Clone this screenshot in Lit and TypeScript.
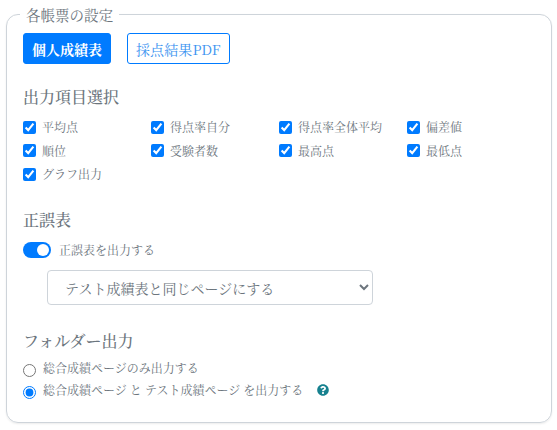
import { LitElement, html, css } from "lit";
import { customElement } from "lit/decorators.js";

const items = ["平均点", "得点率自分", "得点率全体平均", "偏差値", "順位", "受験者数", "最高点", "最低点", "グラフ出力"];

@customElement("app-root")
export class AppRoot extends LitElement {
  static styles = css`
    :host { display: block; font-family: "Noto Serif CJK JP", "DejaVu Serif", "Noto Sans CJK JP", serif; color: #6c757d; background: #fff; height: 430px; box-sizing: border-box; padding: 5px 6px 0; }
    * { box-sizing: border-box; }
    fieldset { margin: 0; height: 418px; width: 545px; border: 1px solid #ced4da; border-radius: 12px; padding: 0 16px; box-shadow: 0 1px 2px rgba(0,0,0,.08); }
    legend { font-size: 14.5px; line-height: 16px; padding: 2px 6px 0; margin-left: -3px; }
    .tabs { display: flex; gap: 16px; margin-top: 10px; }
    .btn { height: 31px; border-radius: 3px; border: 1px solid #007bff; font: inherit; font-size: 14px; padding: 0 8px; background: #fff; color: #3b93f0; }
    .btn.alt { letter-spacing: .1px; }
    .btn.on { background: #007bff; border-color: #007bff; color: #fff; font-weight: 700; }
    h3 { margin: 0; font-size: 16px; line-height: 20px; font-weight: 500; color: #6c757d; }
    .h1 { margin-top: 23px; }
    .grid { display: grid; grid-template-columns: repeat(4, 128px); row-gap: 3.5px; margin-top: 10px; }
    label { display: flex; align-items: center; font-size: 12px; line-height: 20px; height: 20px; }
    input[type=checkbox] { margin: 0 6px 0 0; width: 13px; height: 13px; accent-color: #007bff; }
    .h2 { margin-top: 26px; }
    .switch { margin-top: 10px; gap: 8px; }
    .track { width: 28px; height: 16px; border-radius: 8px; background: #007bff; display: flex; justify-content: flex-end; align-items: center; padding-right: 2px; }
    .knob { width: 12px; height: 12px; border-radius: 50%; background: #fff; }
    select { display: block; margin: 10px 0 0 24px; width: 326px; height: 35px; border: 1px solid #ced4da; border-radius: 4px; background: #fff; color: #6c757d; font: inherit; font-size: 14px; padding: 0 13px; }
    .h3 { margin-top: 26px; }
    .radio { gap: 7px; height: 22px; align-items: center; padding-bottom: 2px; }
    .radio input { margin: 4px 0 0; width: 13px; height: 13px; accent-color: #007bff; }
    .r1 { margin-top: 7px; }
    .help { margin-left: 7px; width: 12px; height: 12px; display: block; }
  `;
  render() {
    return html`<fieldset>
      <legend>各帳票の設定</legend>
      <div class="tabs"><button class="btn on">個人成績表</button><button class="btn alt">採点結果PDF</button></div>
      <h3 class="h1">出力項目選択</h3>
      <div class="grid">${items.map((t) => html`<label><input type="checkbox" checked />${t}</label>`)}</div>
      <h3 class="h2">正誤表</h3>
      <label class="switch"><span class="track"><span class="knob"></span></span>正誤表を出力する</label>
      <select><option>テスト成績表と同じページにする</option></select>
      <h3 class="h3">フォルダー出力</h3>
      <label class="radio r1"><input type="radio" name="f" />総合成績ページのみ出力する</label>
      <label class="radio"><input type="radio" name="f" checked />総合成績ページ と テスト成績ページ を出力する
        <svg class="help" viewBox="0 0 512 512"><path fill="#17818f" d="M504 256c0 137-111 248-248 248S8 393 8 256 119 8 256 8s248 111 248 248zM263 90c-54 0-89 23-116 63-4 5-3 12 3 16l35 26c5 4 13 3 17-2 18-23 30-36 58-36 21 0 46 13 46 33 0 15-12 23-33 34-23 13-54 30-54 71v4c0 7 5 12 12 12h56c7 0 12-5 12-12v-1c0-29 84-30 84-107 0-58-60-101-120-101zm-7 248c-25 0-46 21-46 46s21 46 46 46 46-21 46-46-21-46-46-46z"/></svg>
      </label>
    </fieldset>`;
  }
}
